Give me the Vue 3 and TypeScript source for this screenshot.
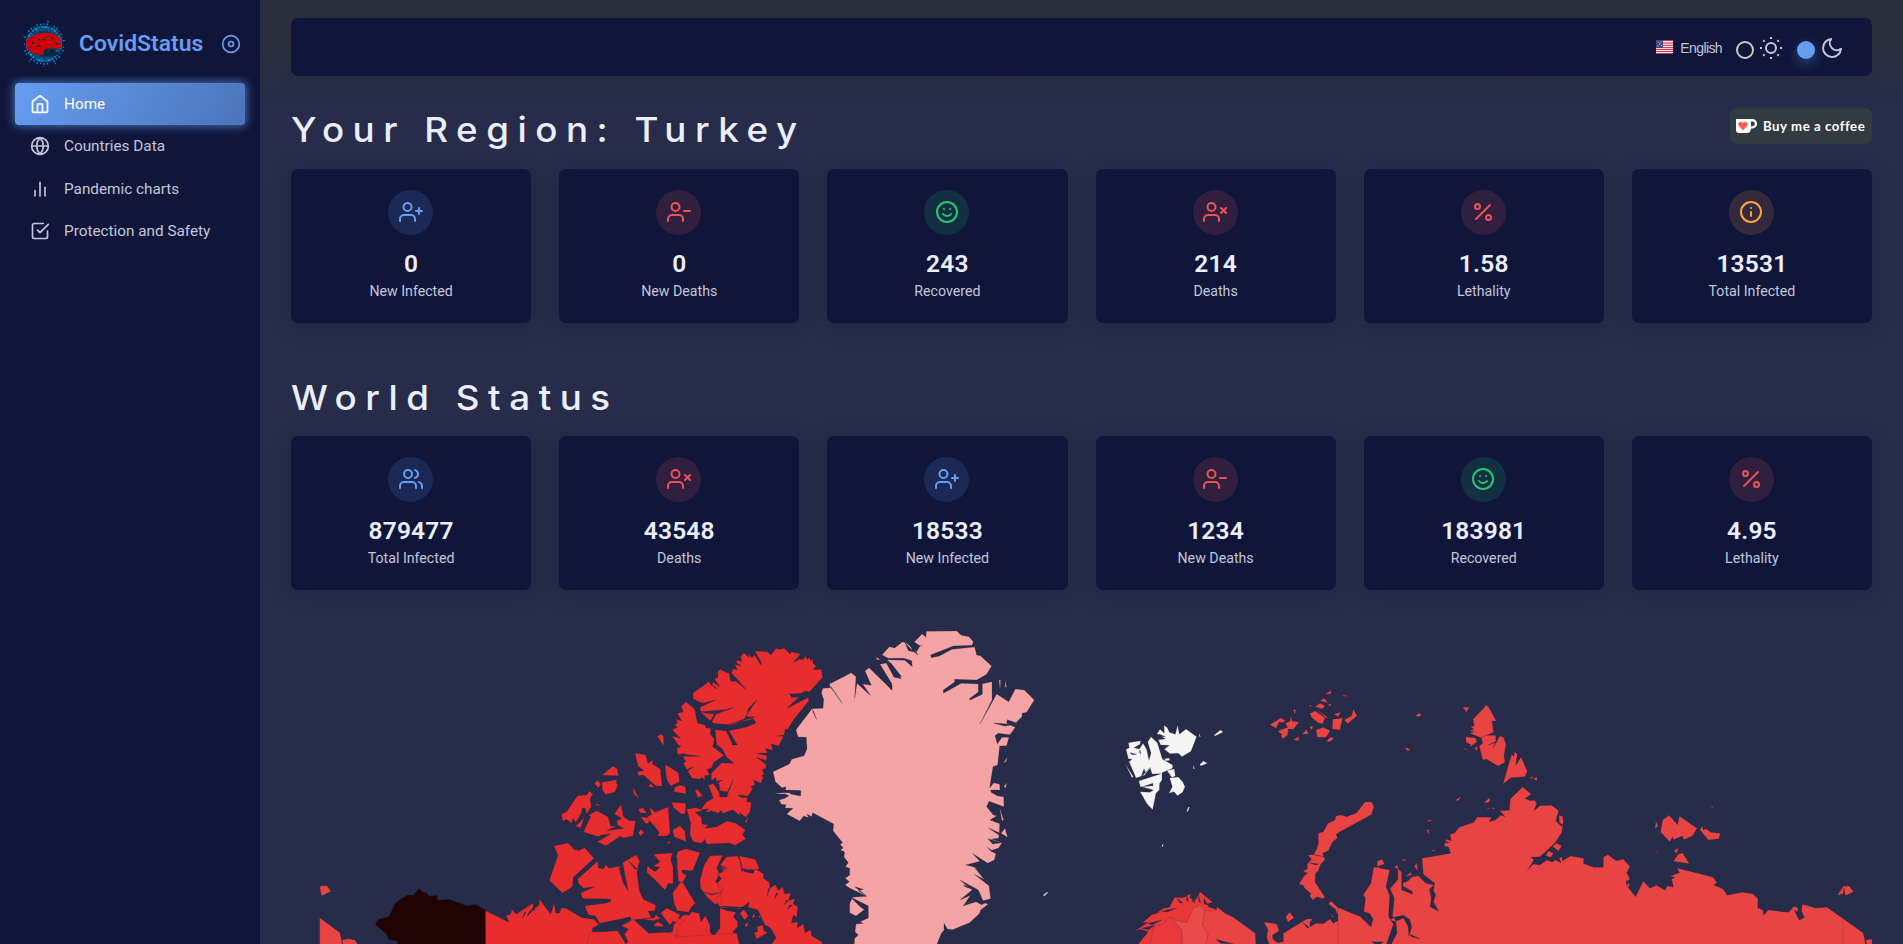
<script setup lang="ts">
interface Stat { icon: string; tone: string; value: string; label: string }
interface Section { title: string; stats: Stat[] }
interface Region { name: string; origin: [number, number]; fill: string; d: string; cuts?: string }

const icons: Record<string, string> = {
  home: 'M3 9l9-7 9 7v11a2 2 0 0 1-2 2H5a2 2 0 0 1-2-2zM9 22V12h6v10',
  globe: 'M2 12a10 10 0 1 0 20 0a10 10 0 1 0-20 0M2 12h20M12 2a15.3 15.3 0 0 1 4 10 15.3 15.3 0 0 1-4 10 15.3 15.3 0 0 1-4-10 15.3 15.3 0 0 1 4-10z',
  bars: 'M18 20V10M12 20V4M6 20v-6',
  check: 'M9 11l3 3L22 4M21 12v7a2 2 0 0 1-2 2H5a2 2 0 0 1-2-2V5a2 2 0 0 1 2-2h11',
  disc: 'M2 12a10 10 0 1 0 20 0a10 10 0 1 0-20 0M9 12a3 3 0 1 0 6 0a3 3 0 1 0-6 0',
  sun: 'M7 12a5 5 0 1 0 10 0a5 5 0 1 0-10 0M12 1v2M12 21v2M4.22 4.22l1.42 1.42M18.36 18.36l1.42 1.42M1 12h2M21 12h2M4.22 19.78l1.42-1.42M18.36 5.64l1.42-1.42',
  moon: 'M21 12.79A9 9 0 1 1 11.21 3 7 7 0 0 0 21 12.79z',
  plus: 'M16 21v-2a4 4 0 0 0-4-4H5a4 4 0 0 0-4 4v2M4.5 7a4 4 0 1 0 8 0a4 4 0 1 0-8 0M20 8v6M23 11h-6',
  minus: 'M16 21v-2a4 4 0 0 0-4-4H5a4 4 0 0 0-4 4v2M4.5 7a4 4 0 1 0 8 0a4 4 0 1 0-8 0M23 11h-6',
  cross: 'M16 21v-2a4 4 0 0 0-4-4H5a4 4 0 0 0-4 4v2M4.5 7a4 4 0 1 0 8 0a4 4 0 1 0-8 0M18 8l5 5M23 8l-5 5',
  users: 'M17 21v-2a4 4 0 0 0-4-4H5a4 4 0 0 0-4 4v2M5 7a4 4 0 1 0 8 0a4 4 0 1 0-8 0M23 21v-2a4 4 0 0 0-3-3.87M16 3.13a4 4 0 0 1 0 7.75',
  smile: 'M2 12a10 10 0 1 0 20 0a10 10 0 1 0-20 0M8 14s1.5 2 4 2 4-2 4-2M9 9h.01M15 9h.01',
  percent: 'M19 5L5 19M4 6.5a2.5 2.5 0 1 0 5 0a2.5 2.5 0 1 0-5 0M15 17.5a2.5 2.5 0 1 0 5 0a2.5 2.5 0 1 0-5 0',
  info: 'M2 12a10 10 0 1 0 20 0a10 10 0 1 0-20 0M12 16v-4M12 8h.01',
}

const menu = [
  { icon: 'home', label: 'Home', active: true },
  { icon: 'globe', label: 'Countries Data', active: false },
  { icon: 'bars', label: 'Pandemic charts', active: false },
  { icon: 'check', label: 'Protection and Safety', active: false },
]

const sections: Section[] = [
  {
    title: 'Your Region: Turkey',
    stats: [
      { icon: 'plus', tone: 'blue', value: '0', label: 'New Infected' },
      { icon: 'minus', tone: 'red', value: '0', label: 'New Deaths' },
      { icon: 'smile', tone: 'green', value: '243', label: 'Recovered' },
      { icon: 'cross', tone: 'red', value: '214', label: 'Deaths' },
      { icon: 'percent', tone: 'red', value: '1.58', label: 'Lethality' },
      { icon: 'info', tone: 'orange', value: '13531', label: 'Total Infected' },
    ],
  },
  {
    title: 'World Status',
    stats: [
      { icon: 'users', tone: 'blue', value: '879477', label: 'Total Infected' },
      { icon: 'cross', tone: 'red', value: '43548', label: 'Deaths' },
      { icon: 'plus', tone: 'blue', value: '18533', label: 'New Infected' },
      { icon: 'minus', tone: 'red', value: '1234', label: 'New Deaths' },
      { icon: 'smile', tone: 'green', value: '183981', label: 'Recovered' },
      { icon: 'percent', tone: 'red', value: '4.95', label: 'Lethality' },
    ],
  },
]

// Outlines are stored at three units per map pixel, relative to each region's origin.
const regions: Region[] = [
  {
    name: 'Chukotka', origin: [300, 620], fill: '#e84444',
    d: 'M59 800L65 797L81 797L93 814L65 828ZM59 893L120 938L128 980H59ZM126 960L145 956L165 960L178 980H130Z',
  },
  {
    name: 'Alaska', origin: [300, 620], fill: '#1f0403',
    d: 'M226 914L234 898L266 890L286 849L320 826L341 824L358 805L370 818L377 816L388 828L412 826L413 841L447 838L503 858L526 853L557 871V980H292V963L266 959L260 943Z',
  },
  {
    name: 'Canada mainland', origin: [300, 620], fill: '#e82d2f',
    d: 'M557 872L627 907L618 887L632 883L636 868L648 883L700 849L699 862L683 885L717 855L718 837L752 882L762 851L768 880L778 879L784 864L798 865L846 893L882 898L900 916L876 934L950 938L960 980H557Z',
    cuts: 'M668 895L674 875L678 877ZM680 890L690 872L692 876ZM699 866L706 856L703 872Z',
  },
  {
    name: 'Canada west islands', origin: [540, 620], fill: '#e82d2f',
    d: 'M42 678L84 669L105 690L112 687L113 693L134 683L162 715L100 772L97 801L67 819L28 781L54 706ZM65 582L80 575L112 527L140 525L148 513L159 523L150 535L154 560L140 582L135 565L127 564L124 580L107 608L100 595L94 610L80 598L68 604ZM108 618L133 592L122 624ZM163 490L173 481L183 493L175 504ZM186 466L219 438L232 447L236 467ZM186 487L231 479L228 490L234 494L225 516L197 524L187 510ZM165 556L170 551L186 557ZM130 636L152 590L146 585L170 572L204 590L212 619L231 618L222 622L200 632L238 627L250 625L233 615L230 603L246 595L223 582L243 553L250 590L268 602L287 603L279 648L247 654L242 648L198 677L172 665L212 641L184 645L176 650ZM285 400L317 404L324 430L339 419L337 432L361 447L366 498H348L310 465L295 467L292 455L312 452L294 438ZM325 500L332 490L342 502ZM278 500L298 536L282 523ZM352 349L364 342L371 350V378ZM375 440L380 435L415 458L419 485L392 498L380 478ZM405 502L420 495L437 501L438 521L402 515ZM465 512L472 507L488 528L474 533ZM295 566L310 564L320 580L300 578ZM295 640L302 628L312 637L302 648ZM302 591L325 593L328 606L318 612ZM320 592L335 583L328 562L345 577L385 561L390 640L380 648H352L358 638L350 627ZM395 547L438 550L436 580L425 583L400 562ZM398 630L420 617L435 634L438 665L402 650ZM380 670L388 663L390 671Z',
  },
  {
    name: 'Axel Heiberg Island', origin: [540, 620], fill: '#e82d2f',
    d: 'M438 246L456 260L465 270L472 309L495 315L498 324L513 325L510 340L523 357L518 380L552 406L520 428L515 443L500 449L510 465L494 467L495 480L485 472L478 478L455 474L429 429L438 425L428 409L443 405L430 400L413 404L410 383L420 382L396 348L422 355L403 337L397 329L412 322L405 314L413 308L407 297L425 303L412 280L430 276L424 259Z',
    cuts: 'M429 409L480 409L444 404ZM435 458L462 440L436 450ZM410 383L424 378L410 376Z',
  },
  {
    name: 'Ellesmere Island', origin: [540, 620], fill: '#e82d2f',
    d: 'M459 219L490 197L508 184L514 198L520 186L540 202L524 177L534 170L534 154L542 148L560 158L567 158L572 184L588 184L620 210L574 158L580 146L592 150L584 133L605 139L590 128L590 119L605 125L602 110L612 98L628 113L625 100L636 113L644 104L662 135L664 128L645 93L682 95L693 105L708 85L717 88L733 85L750 102L755 95L782 103L758 128L778 118L790 118L797 107L801 118L810 113L812 123L819 116L818 128L828 138L820 149L844 148L848 172L808 216L796 213L784 220L752 222L748 220L755 233L778 230L740 265L806 232L806 243L762 298L742 329L736 327L732 345L708 348L731 349L716 377L694 372L698 391L676 385L682 399L650 400L681 407L679 422L650 412L678 434L678 444L666 450L673 461L664 468L671 470L668 477L662 490L641 480L645 494L632 500L638 507L624 528L593 524L605 533L621 532L621 546L634 547L630 575L617 592L599 578L600 587L578 569L550 580L542 571L536 580L509 571L512 576L498 575L506 566L482 569L500 545L520 535L505 495L521 491L536 514L540 531H561L565 516L540 512L536 486L548 480L530 484L527 472L514 482V460L545 428L582 430L560 412L545 385L530 374L525 329L559 333L578 375H592L567 332L622 320L648 309L640 297L600 306L570 316L545 312L520 310L482 277L480 262L527 240L488 250L460 237Z',
    cuts: 'M506 184L532 207L524 203ZM478 275L550 270L580 263L555 272L528 283L514 308L510 305L523 282L500 280ZM553 316L575 312L612 297L650 240L624 267L621 290L645 291L605 303ZM595 312L605 303L614 304ZM560 520L580 480L567 512Z',
  },
  {
    name: 'Devon Island', origin: [540, 620], fill: '#e82d2f',
    d: 'M440 567L470 563L488 572L465 577L484 592L486 612L505 615L495 625L530 620L560 604L585 608L616 630L607 645L618 656L586 676L569 669L500 672L494 658L484 670L460 665L450 645L452 610ZM615 607L625 585L620 609Z',
  },
  {
    name: 'Victoria Island', origin: [540, 620], fill: '#e82d2f',
    d: 'M113 776L173 722L175 743L189 747L198 735L208 745L239 738L260 796L248 728L285 706L299 722L291 756L298 812L310 838L347 855L345 872L324 874L334 893L275 901L270 890L182 914L166 888L145 884L134 857L202 848L213 837L129 837L122 819L163 800L130 804L115 790ZM264 720L290 705L300 725L290 747Z',
    cuts: 'M113 776L172 724L122 762ZM129 836L205 837L214 844L196 850L132 857ZM236 740L251 756L265 812L250 790ZM265 722L292 748L284 746Z',
  },
  {
    name: 'Central arctic islands', origin: [540, 620], fill: '#e82d2f',
    d: 'M340 703L397 699L392 720L401 745L399 792L385 790L375 810L340 775L320 757L322 738L345 755L360 742L340 738L360 726ZM408 710L415 694L438 686L480 698L458 752L425 750L428 760L440 766L426 790L415 782ZM398 820L415 795L426 783L466 850L452 864L446 877L412 872L402 850ZM482 805L480 780L492 736L510 707L548 706L530 745L538 760L527 785L550 805L543 823L546 848L525 852L500 830ZM540 735L560 710L592 708L604 728L614 755L640 760L645 745L671 762L670 775L688 787L690 805L706 794L715 812L728 800L734 822L752 819L745 842L765 835L759 851L774 861L770 892L760 885L754 909L773 905L772 924L790 912L795 938L812 930L815 948L845 965L850 980H690L708 953L692 924L675 915L654 870L624 862L628 846L600 866L540 862L528 840L545 815L532 790L545 775L530 762L549 756ZM596 707L646 718L658 747L610 750ZM362 880L380 864L422 885L414 895L432 902L420 914L400 903L390 915ZM382 980L375 940L398 935L400 915L430 885L448 886L455 875L477 880L483 906L496 887L510 915V935L520 950L540 925V864L562 872L588 877L580 890L593 905V920L578 935L590 950L598 980ZM642 938L652 935V920L668 915L672 932L682 938L650 957Z',
    cuts: 'M398 713L411 712L412 790L401 798ZM597 706L606 748L620 745L605 755ZM480 812L515 822L546 817L515 825ZM537 858L610 862L585 866ZM540 735L562 745L545 742ZM540 742L558 750L546 749ZM690 805L681 828L685 806ZM714 820L704 836L708 820ZM744 842L733 854L738 841ZM758 855L742 868L749 855Z',
  },
  {
    name: 'Canada mainland coast', origin: [540, 620], fill: '#e82d2f',
    d: 'M150 937L233 932L258 972L264 966L253 943L265 927L244 917L280 898L326 940L378 937L420 950L590 940L600 980H140ZM310 898L343 893L348 884L361 896L340 902ZM353 905L370 914L368 920L340 918ZM406 952L414 928L412 955ZM600 880L612 868L625 888L613 900ZM612 915L625 906L622 922ZM656 890L664 880L660 895ZM640 880L646 890L636 895Z',
    cuts: 'M157 925L184 909L268 892L262 906L213 920L205 934L158 935Z',
  },
  {
    name: 'Greenland', origin: [760, 620], fill: '#f5a4a5',
    d: 'M208 192L250 171L273 158L283 166L288 170L284 235L291 190L332 227L308 192L334 196L315 153L327 143L396 210L395 190L360 133L379 129L402 172L424 176L400 140L382 119L434 121L457 140L455 122L432 115H385L366 105L388 80L404 84L428 65L440 70L470 95L480 78L463 66L486 42L498 51L499 34L590 33L604 46L627 50L640 65L636 76L580 78L512 105L514 113L538 108L576 88L644 81L650 105L661 107L695 138L680 163L650 180L584 178V186L550 210V220L604 190L655 192V216L628 236L631 240L667 223V191L696 185V240L660 312L710 222L746 245L766 207L793 210L823 240L800 277L786 280V290L768 308L742 299L740 310L766 322L750 344L715 340L705 347L712 372L726 352L747 352L740 377L719 378L713 435L699 440L689 503L702 488L719 493L720 510L692 510L693 517L713 528L731 530L732 560L687 544L680 560L700 585L711 587L690 600L719 611L718 638L685 624L717 645L716 655L695 657L726 668L716 684L695 691L682 682L692 693L708 701L703 720L683 730L637 700L660 724L617 735L646 742L681 782L643 763L687 797L692 836L669 842L655 810L600 780L625 802L637 809L600 840L645 820L650 835L610 857L656 843L685 852L662 870L658 881L629 908L592 923L578 929L562 927L552 910V931L544 940L528 980H282L284 955L295 945L285 935L288 912L310 910L300 905L325 894V858L272 832L312 860L314 868L288 888L269 878V850L278 832L320 829L270 805L255 795L268 785L256 775L269 765V745L256 740L265 728L252 711L254 696L241 690L250 684L240 673L248 668L219 632L221 612L165 582L158 578L155 590L141 582L146 593L131 588L119 603L80 582L99 565L75 564L78 554L64 553L57 540L75 535L87 527L75 522L42 522L66 518H123L120 512L76 510L78 500L66 503L46 485L39 455L88 432L95 418L132 407L141 387L139 352L114 351L108 329L156 266L189 265L191 238L184 218L189 205L212 203ZM717 180L722 180L720 210ZM735 180L740 203L735 200ZM718 560L731 600L726 602ZM723 640L735 625L743 652ZM730 430L743 410L738 425ZM732 498L741 488L736 506ZM349 112L362 119H350Z',
    cuts: 'M212 202L247 250L214 202ZM78 512H122L122 528L95 523ZM158 268L170 298L160 278ZM290 165L298 180L308 195L293 188ZM320 128L396 195V211ZM284 800L310 808L295 812L320 828ZM272 832L323 858L318 872L302 862ZM640 738L682 778L676 782ZM655 715L684 731L666 733ZM642 810L662 842L684 846L664 854L640 840L610 858ZM702 310L716 310L760 314L735 318ZM610 795L642 808L616 801ZM684 656L725 668L698 672ZM435 68L460 95L445 92ZM445 62L474 105L458 93ZM446 70L487 78L462 73ZM390 126L425 170L402 165Z',
  },
  { name: 'Jan Mayen', origin: [760, 620], fill: '#d8dedd', d: 'M849 825L862 815L864 818L852 829Z' },
  {
    name: 'Svalbard', origin: [1080, 680], fill: '#f5f5f5',
    d: 'M138 208L148 203L145 188L182 182L180 193L162 203L178 207L189 190L200 208L207 241L213 219L203 186L213 170L232 188L247 237L278 255V265L246 278V300L239 310L238 330L228 340L218 389L205 376L200 370L180 335L210 337L220 330L184 320L219 317V310L182 322L176 303L243 281L216 282L211 265L193 286L168 294L147 245L156 238L145 236ZM231 161L240 148L253 160L252 136L262 143L268 157L286 163L293 135L298 163L318 147L350 170L333 214L306 230L295 220L270 221L253 208L268 196L242 195L235 179L256 177ZM136 252L160 290L156 293ZM260 271L283 267L286 288L276 293ZM269 294L295 291L308 305L315 320L308 337L292 347L282 335L267 340L277 320ZM402 166L421 150L430 156L405 168ZM360 253L370 243L382 250L362 258ZM340 255L344 266L340 267ZM320 393L325 381L329 382L323 396ZM357 159L362 170L358 170ZM246 494L250 492L249 500L246 500ZM254 236L267 234L270 241L256 243Z',
    cuts: 'M150 218L170 223L157 224ZM183 292L211 262L196 277L192 266ZM180 210L183 222L178 217ZM237 162L256 170L238 170Z',
  },
  {
    name: 'Franz Josef Land', origin: [1080, 680], fill: '#e84444',
    d: 'M570 134L603 113L616 122L608 128L598 125L588 145ZM639 87L648 91L644 103ZM633 107L636 123L657 127L640 148L625 147L623 165L608 176L603 167L606 163L594 155L600 150L623 142L616 130L630 124ZM640 180L655 170L658 182ZM666 163L679 149L686 162ZM690 100L706 93L735 114L728 132L714 128L694 112ZM735 43L755 31L752 42ZM720 63L732 55L745 68ZM705 80L720 70L736 78L726 87ZM745 72L754 71L750 80ZM710 90L742 112L738 115ZM758 118L788 114L780 150L757 147ZM762 103L783 96L774 110ZM793 120L815 107L820 88L831 107L803 131ZM708 150L730 142L751 152L738 172L712 172ZM739 183L753 170L762 177L747 186ZM789 45L810 49L790 49ZM688 140L699 138L696 150ZM687 75L694 76L692 81Z',
  },
  {
    name: 'Novaya Zemlya', origin: [1080, 680], fill: '#e84444',
    d: 'M855 366H875L882 380L874 404L780 455L768 463L773 474L758 485L745 512L728 520L735 540L722 553L715 572L707 580L705 606L735 652L728 656L711 650L699 660L682 640L669 616L657 613L671 589L683 580L669 573L682 567V552L695 537L684 526L702 522L711 505L715 490V460L730 455L744 430L765 420L768 408L783 405L800 410L829 399Z',
    cuts: 'M670 622L692 640L690 648L680 640ZM695 522L732 530L707 526ZM688 548L716 552L705 555Z',
  },
  {
    name: 'Norway', origin: [1080, 680], fill: '#e83838',
    d: 'M164 753L205 727L188 728L215 704L239 696L220 706L250 685L268 682L284 652L308 653L333 641L330 654L347 660L360 635L398 667L382 672L385 680L410 689L425 687L412 700V800H168L205 755L180 748Z',
    cuts: 'M205 730L245 720L215 735ZM245 694L290 684L262 696ZM290 655L308 668L300 670ZM318 645L327 665L320 661ZM338 645L345 669L337 663ZM355 643L357 665L362 668ZM372 655L372 672L383 674ZM185 745L225 736L205 749Z',
  },
  { name: 'Sweden', origin: [1080, 680], fill: '#e93b3b', d: 'M208 800L220 742L243 735L272 711L306 751V800Z' },
  { name: 'Finland', origin: [1080, 680], fill: '#e94b4b', d: 'M272 711L290 722L320 728L340 685L360 676L374 690L368 735L385 760L378 800H308L305 750Z' },
  {
    name: 'Kola and White Sea coast', origin: [1080, 680], fill: '#e84444',
    d: 'M374 690L392 694L410 690V680L418 686L435 700L460 712L526 760L528 800H376L385 762L368 736ZM552 726L590 732L598 752L578 765L578 777L592 788L610 785V760L680 717L698 716L690 727L690 740L708 730L730 731L750 717L760 730L780 718L766 688L745 671L754 663L775 685L840 709L874 742L888 720L880 700L852 694L857 655L850 645L873 610L880 565L900 562V800H570L560 772L564 750ZM617 710L629 697L642 713L624 727ZM751 702L762 710L758 712Z',
    cuts: 'M408 778L460 792L422 790ZM668 727L688 742L682 744Z',
  },
  {
    name: 'Severnaya Zemlya', origin: [1340, 680], fill: '#e84444',
    d: 'M399 118L432 83L438 75L446 81L469 123H456L461 157L423 173L389 160L403 155L387 152L402 148L392 141L403 137ZM424 173L437 166H467L468 185L480 168L490 172L498 192L492 228L495 247L474 258L440 238L428 240L418 198L428 190ZM377 170L407 174L411 186L389 201L392 193L379 188ZM372 206L383 207L376 210ZM403 203L413 200L410 213ZM489 312L514 225L522 228L524 215L532 222L527 257L543 231L562 274L555 290L513 293ZM580 297L590 290L592 302ZM570 293L580 288L576 297ZM368 82L388 82L379 96ZM227 107L237 99L246 106L234 110ZM193 202L209 207V212L202 212ZM432 367L449 353L450 362L444 368ZM348 359L365 349L353 364ZM442 384L453 387H442ZM456 382L464 384L460 390ZM260 424L268 419L278 423ZM260 451L266 447L268 465ZM274 513L282 509L288 514Z',
    cuts: 'M459 203L475 178L468 187L445 195L468 184Z',
  },
  {
    name: 'Siberia west', origin: [1340, 680], fill: '#e84444',
    d: 'M-6 683L0 685L60 710L93 742L99 716L88 700L72 695L77 652L70 645L93 610L102 561L149 570L138 620L149 645L146 710L160 733L137 800H-6ZM111 560L112 543L127 538L133 552ZM150 626L174 598L173 565L185 577V630L218 643L216 634L188 618L190 608L203 604L217 590L235 587L258 610L282 615L268 628L274 655L270 680L296 694L280 665L287 645L280 630L284 610L250 583L246 535L332 520L326 502L312 498L318 478L334 482L330 463L343 460L358 442L402 427L412 411L454 412L448 425L466 420L482 406L495 410L480 392L508 391L511 357L548 321L574 343L555 355L570 362L583 361L590 370L582 392L600 377L635 376L655 391L656 406L668 409L670 425L665 458L645 489L600 530L572 532L582 540L562 571L580 552L600 555L620 540L637 546L647 540L663 548L658 535L665 530L668 542L691 528L731 535V551L762 562H789L786 800H150L171 760L168 725L150 720L164 712L157 710L163 655ZM162 560L174 556V568ZM184 540L192 537L200 544ZM223 560L230 548L234 572ZM196 590L212 577L215 584L203 588ZM617 528L625 512L640 520L633 532ZM638 500L648 489L665 497L656 513Z',
    cuts: 'M162 712L190 706L208 718L215 740L207 768L204 738L190 714L168 724ZM210 763L240 777L215 770ZM95 785L130 786L120 792H104ZM648 423L665 440L668 434L658 428L657 402L663 390L652 405ZM305 480L330 488L315 488ZM432 407L460 400L450 410Z',
  },
  {
    name: 'Siberia east', origin: [1600, 760], fill: '#e84444',
    d: 'M0 322H10V291L24 284L48 302L70 298L90 320L80 338L90 357L80 365L90 375L84 382L107 410L130 363L149 385L170 376L195 391L202 377L220 382L215 357L226 352L210 349L238 338L231 324L340 352L351 368L341 375L369 387L382 406L428 397L460 402L474 417L473 443L489 451L491 466L505 450L565 457L583 439L595 445L592 455L582 450L598 481L613 472L604 452L608 433L647 444L681 442L790 519L798 560H0ZM797 541L816 537V560H803ZM182 215L188 180L207 166L233 194L238 168L291 205L278 227L252 239L247 228L220 239L218 230L209 245L182 217ZM300 210L306 198L310 210L318 206L332 217L361 220L357 236L325 240ZM165 206L168 183L174 198ZM165 268L174 280L172 281ZM222 272L236 263L230 280ZM220 304L235 282L248 279L268 311ZM712 406L730 379L747 378L761 395L736 407L732 384L729 402ZM330 145L342 136L340 141Z',
    cuts: 'M78 362L85 364L81 378Z',
  },
]

// Cover shared inner edges between adjoining parts of one country.
const joins = [
  { x: 1598.5, y: 869, w: 6, h: 80, fill: '#e84444' },
  { x: 1376.5, y: 871, w: 5, h: 20, fill: '#e84444' },
]

const spikes = Array.from({ length: 36 }, (_, i) => ({
  angle: i * 10,
  length: [2, 5, 1, 3, 4, 2, 3][i % 7] + Math.abs(Math.cos((i * Math.PI) / 18)) * 1.5,
}))
</script>

<template>
  <div class="app">
    <aside class="sidebar">
      <div class="brand">
        <svg class="logo" viewBox="0 0 42 50">
          <g class="rays">
            <g v-for="s in spikes" :key="s.angle" :transform="`translate(21 25) rotate(${s.angle})`">
              <path :d="`M0 -16V${-17 - s.length}`" />
            </g>
          </g>
          <circle class="ball" cx="21" cy="25" r="18" />
          <circle class="halo" cx="21" cy="25" r="17" />
          <circle class="halo inner" cx="21" cy="25" r="14.500" />
          <path class="land" d="M3 23L5 19L9 18L13 15L19 14L28 14L35 17L38 21L37 24L39 26L37 29L31 30L27 28L25 30L24 34L17 36L9 34L4 30Z" />
          <path class="sea" d="M9 23h2v2H9zM19 20h3v1h-3zM28 18h2v2h-2zM13 28l2-2h2v2zM21 32l2-3 3 2 3-1 2 1 2-1v3l5-1-3 4-7 2-7-1zM15 20h2v1h-2zM33 24h2v2h-2z" />
        </svg>
        <span class="name">CovidStatus</span>
        <svg class="icon pin" viewBox="0 0 24 24"><path :d="icons.disc" /></svg>
      </div>
      <nav class="menu">
        <a v-for="m in menu" :key="m.label" :class="['item', { active: m.active }]">
          <svg class="icon" viewBox="0 0 24 24"><path :d="icons[m.icon]" /></svg>
          <span>{{ m.label }}</span>
        </a>
      </nav>
    </aside>

    <main class="main">
      <header class="navbar">
        <svg class="flag" viewBox="0 0 17 14">
          <rect width="17" height="14" fill="#f3e9ee" />
          <path d="M0 .5H17M0 3H17M0 5.3H17M0 7.6H17M0 9.5H17M0 11.5H17M0 13.5H17" stroke="#c8324a" stroke-width="1" />
          <rect width="7" height="8" fill="#46467f" />
          <path d="M1.5 2h1M4.5 2h1M3 4h1.500M1.500 6h1M5 5.500h1" stroke="#d4d4e6" />
        </svg>
        <span class="lang">English</span>
        <span class="radio"></span>
        <svg class="theme" viewBox="0 0 24 24"><path :d="icons.sun" /></svg>
        <span class="radio on"></span>
        <svg class="theme" viewBox="0 0 24 24"><path :d="icons.moon" /></svg>
      </header>

      <section v-for="(sec, i) in sections" :key="sec.title" class="section">
        <div :class="['head', i === 0 ? 'first' : 'second']">
          <h1>{{ sec.title }}</h1>
          <a v-if="i === 0" class="coffee">
            <svg viewBox="0 0 21 14">
              <path d="M0 0H16.500A4.500 4.700 0 0 1 16.500 9.500H15Q14.500 14 11 14H3Q0 14 0 11Z" fill="#fff" />
              <path d="M15 2.500H16.500A2.100 2.100 0 0 1 16.500 7.200H15Z" fill="#323a42" />
              <path d="M7 11.200L2.800 7Q1.400 5.200 2.800 3.500Q5 1.800 7 4Q9 1.800 11.200 3.500Q12.600 5.200 11.200 7Z" fill="#ff5e5b" />
            </svg>
            <span>Buy me a coffee</span>
          </a>
        </div>
        <div class="cards">
          <article v-for="s in sec.stats" :key="s.label" class="card">
            <div :class="['badge', s.tone]">
              <svg class="icon" viewBox="0 0 24 24"><path :d="icons[s.icon]" /></svg>
            </div>
            <h2>{{ s.value }}</h2>
            <p>{{ s.label }}</p>
          </article>
        </div>
      </section>

      <svg class="map" viewBox="291 590 1581 354" width="1581" height="354">
        <g v-for="r in regions" :key="r.name" :transform="`translate(${r.origin[0]} ${r.origin[1]}) scale(0.33333)`">
          <path class="region" :d="r.d" :fill="r.fill" />
          <path v-if="r.cuts" :d="r.cuts" class="fjord" />
        </g>
        <rect v-for="j in joins" :key="j.x" :x="j.x" :y="j.y" :width="j.w" :height="j.h" :fill="j.fill" />
        <path class="meridian" d="M1843 919V944" />
      </svg>
    </main>
  </div>
</template>

<style>
body { margin: 0; overflow: hidden; background: #262c49; }
</style>

<style scoped>
* { box-sizing: border-box; }
.app {
  display: flex;
  width: 1903px;
  height: 944px;
  overflow: hidden;
  background: #262c49;
  color: #c2c6dc;
  font: 14px/1.45 Roboto, "Liberation Sans", sans-serif;
}
.icon { fill: none; stroke: currentColor; stroke-width: 2; stroke-linecap: round; stroke-linejoin: round; width: 20px; height: 20px; flex: none; }

.sidebar { width: 260px; flex: none; background: #10163a; }
.brand { display: flex; align-items: center; height: 76px; padding: 11px 19px 0 23px; color: #659df0; }
.logo { width: 42px; height: 50px; flex: none; overflow: visible; }
.rays path { stroke: #0c83c9; stroke-width: 1.4; stroke-dasharray: 2 1; }
.ball { fill: #073a5e; }
.halo { fill: none; stroke: #0a8fdd; stroke-width: 2.2; stroke-dasharray: 3 1 1 2 2 1; }
.halo.inner { stroke: #08609a; stroke-dasharray: 2 2 1 1; }
.land { fill: #cb0206; }
.sea { fill: #0a2840; }
.name { margin-left: 14px; font-size: 22.9px; font-weight: 600; line-height: 26px; white-space: nowrap; }
.pin { margin-left: auto; }
.menu { display: flex; flex-direction: column; padding: 7px 15px 20px; overflow: hidden; }
.item { display: flex; align-items: center; height: 42.4px; padding-left: 15px; gap: 14px; font-size: 15.3px; border-radius: 4px; }
.item.active { height: 42px; color: #fff; font-weight: 450; background: linear-gradient(118deg, #659df0, rgba(101, 157, 240, .7)); box-shadow: 0 0 10px 1px rgba(101, 157, 240, .7); }

.main {
  width: 1643px;
  padding: 18px 31px 0;
  background: linear-gradient(180deg, rgba(44, 48, 60, .9) 44%, rgba(44, 48, 60, .43) 73%, rgba(44, 48, 60, 0)) top / 100% 102px no-repeat;
}
.navbar { display: flex; align-items: center; justify-content: flex-end; height: 58px; padding-right: 28px; border-radius: 7px; background: #10163a; box-shadow: 0 4px 20px rgba(0, 0, 0, .05); }
.flag { width: 17px; height: 14px; }
.lang { margin: 1px 14px 0 7px; font: 14px/20px "Liberation Sans", sans-serif; letter-spacing: -.6px; }
.radio { width: 18px; height: 18px; margin: 5px 5px 0 0; border: 2px solid #c9c9c4; border-radius: 50%; }
.radio.on { margin-left: 14px; border: 0; background: #659df0; box-shadow: 0 4px 12px rgba(101, 157, 240, .4); }
.theme { width: 24px; height: 24px; margin-top: 2px; fill: none; stroke: #c2c6dc; stroke-width: 2; stroke-linejoin: round; }

.head { display: flex; justify-content: space-between; }
.head.first { height: 93px; padding-top: 32px; }
.head.second { height: 113px; padding-top: 53px; }
h1 { margin: 1px 0 0; color: #ebeefd; font: 450 34.5px/42px Inter, "Open Sans", sans-serif; letter-spacing: 8px; white-space: nowrap; transform: scaleX(1.065); transform-origin: left; }
.coffee { display: flex; align-items: center; gap: 6px; width: 142px; height: 36px; padding-left: 6px; border-radius: 7px; background: #323a42; color: #fff; font: 700 13.2px/20px Lato, sans-serif; letter-spacing: .55px; white-space: nowrap; }
.coffee svg { width: 21px; height: 14px; flex: none; }
.cards { display: grid; grid-template-columns: repeat(6, 1fr); gap: 28px; }
.card { display: flex; flex-direction: column; align-items: center; height: 154px; padding-top: 21px; border-radius: 7px; background: #10163a; box-shadow: 0 4px 25px rgba(0, 0, 0, .1); }
.badge { display: grid; place-items: center; width: 45px; height: 45px; margin-right: 1px; border-radius: 50%; }
.badge .icon { width: 24px; height: 24px; margin-top: -1px; }
.blue { color: #659df0; background: rgba(101, 157, 240, .15); }
.red { color: #ea5455; background: rgba(234, 84, 85, .15); }
.green { color: #28c76f; background: rgba(40, 199, 111, .15); }
.orange { color: #ff9f43; background: rgba(255, 159, 67, .15); }
h2 { margin: 14px 0 0; color: #ebeefd; font-size: 24.5px; font-weight: 600; line-height: 29px; letter-spacing: .2px; }
p { margin: 3px 0 0; font-size: 14.2px; line-height: 20px; }

.map { display: block; }
.region { stroke: #3c2030; stroke-width: 1.2; stroke-opacity: .5; stroke-linejoin: round; }
.fjord { fill: #262c49; stroke: #262c49; stroke-width: .8; }
.meridian { stroke: #c93c40; stroke-width: 1; }
</style>
